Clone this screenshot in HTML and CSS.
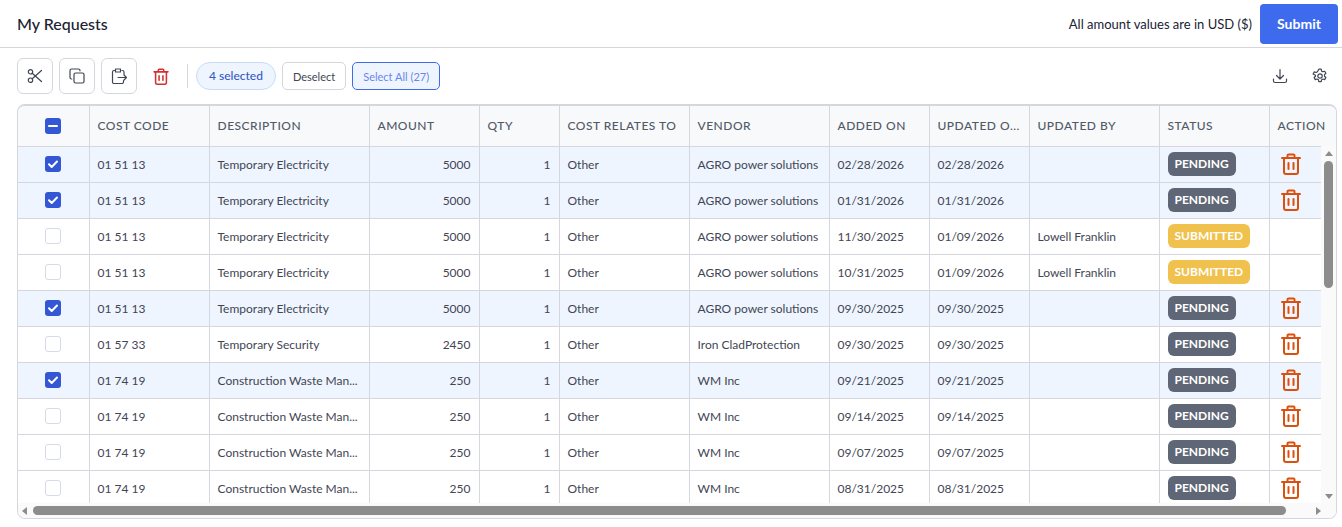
FILE: index.html
```html
<!DOCTYPE html>
<html>
<head>
    <title>My Requests</title>
    <link rel="stylesheet" href="styles.css">
</head>
<body>
    <svg class="defs" width="0" height="0">
        <symbol id="bin" viewBox="0 0 20 22">
            <path d="M1 5h18M6.500 5V2.500a1 1 0 0 1 1-1h5a1 1 0 0 1 1 1V5M3 5v14a2 2 0 0 0 2 2h10a2 2 0 0 0 2-2V5M7.500 10v6M12.500 10v6"/>
        </symbol>
    </svg>
    <header class="topbar">
        <h1>My Requests</h1>
        <div class="topbar-right">
            <span class="currency-note">All amount values are in USD ($)</span>
            <button class="submit">Submit</button>
        </div>
    </header>
    <div class="toolbar">
        <button class="tool">
            <svg viewBox="0 0 16 16" width="16" height="16"><circle cx="3.500" cy="3.800" r="2.200"/><circle cx="3.500" cy="12.200" r="2.200"/><path d="M5.200 5.200 14.500 13.500M5.200 10.800 14.500 2.500"/></svg>
        </button>
        <button class="tool">
            <svg viewBox="0 0 16 16" width="16" height="16"><rect x="5" y="5" width="10" height="10" rx="1.500"/><path d="M2.800 11H2.500A1.500 1.500 0 0 1 1 9.500v-7A1.500 1.500 0 0 1 2.500 1h7A1.500 1.500 0 0 1 11 2.500v.3"/></svg>
        </button>
        <button class="tool">
            <svg viewBox="0 0 16 16" width="16" height="16"><path d="M4.500 2.500H3A1.500 1.500 0 0 0 1.500 4v10A1.500 1.500 0 0 0 3 15.500h8a1.500 1.500 0 0 0 1.500-1.500v-1.500M11 2.500h.5A1.500 1.500 0 0 1 13 4v3M4.500 1h5v3h-5zM7 9.500h8.500M13 7l2.500 2.500L13 12"/></svg>
        </button>
        <button class="tool-plain">
            <svg class="bin-red" width="16" height="17"><use href="#bin"/></svg>
        </button>
        <span class="divider"></span>
        <span class="selected-pill">4 selected</span>
        <button class="deselect">Deselect</button>
        <button class="select-all">Select All (27)</button>
        <div class="toolbar-right">
            <svg viewBox="0 0 16 16" width="16" height="16"><path d="M8 1.500v9M4.500 7.500 8 11l3.500-3.500M1.500 11v2a1.500 1.500 0 0 0 1.500 1.500h10a1.500 1.500 0 0 0 1.500-1.500v-2"/></svg>
            <svg viewBox="0 0 16 16" width="16" height="16"><circle cx="8" cy="8" r="2.200"/><path d="M6.800 1.200h2.400l.4 1.900 1.300.7 1.800-.6 1.200 2.100-1.400 1.300v1.600l1.400 1.300-1.200 2.100-1.800-.6-1.300.7-.4 1.900H6.800l-.4-1.900-1.300-.7-1.800.6-1.200-2.100 1.400-1.300V7.300L1.100 6l1.200-2.100 1.800.6 1.300-.7z"/></svg>
        </div>
    </div>
    <div class="grid-wrap">
        <table class="grid">
            <colgroup>
                <col class="c-check"><col class="c-code"><col class="c-desc"><col class="c-amount"><col class="c-qty"><col class="c-rel"><col class="c-vendor"><col class="c-date"><col class="c-date"><col class="c-by"><col class="c-status"><col class="c-action">
            </colgroup>
            <thead>
                <tr>
                    <th class="check-cell"><span class="check mixed"><svg viewBox="0 0 16 16"><path d="M4 8h8"/></svg></span></th>
                    <th>COST CODE</th><th>DESCRIPTION</th><th>AMOUNT</th><th>QTY</th><th>COST RELATES TO</th><th>VENDOR</th><th>ADDED ON</th><th>UPDATED O...</th><th>UPDATED BY</th><th>STATUS</th><th>ACTION</th>
                </tr>
            </thead>
            <tbody>
                <tr class="picked">
                    <td class="check-cell"><span class="check on"><svg viewBox="0 0 16 16"><path d="m4 8.300 2.700 2.700L12 5.500"/></svg></span></td>
                    <td>01 51 13</td><td>Temporary Electricity</td><td class="num">5000</td><td class="num">1</td><td>Other</td><td>AGRO power solutions</td><td>02/28/2026</td><td>02/28/2026</td><td></td>
                    <td><span class="badge pending">PENDING</span></td><td><svg class="bin-orange" width="20" height="22"><use href="#bin"/></svg></td>
                </tr>
                <tr class="picked">
                    <td class="check-cell"><span class="check on"><svg viewBox="0 0 16 16"><path d="m4 8.300 2.700 2.700L12 5.500"/></svg></span></td>
                    <td>01 51 13</td><td>Temporary Electricity</td><td class="num">5000</td><td class="num">1</td><td>Other</td><td>AGRO power solutions</td><td>01/31/2026</td><td>01/31/2026</td><td></td>
                    <td><span class="badge pending">PENDING</span></td><td><svg class="bin-orange" width="20" height="22"><use href="#bin"/></svg></td>
                </tr>
                <tr>
                    <td class="check-cell"><span class="check"></span></td>
                    <td>01 51 13</td><td>Temporary Electricity</td><td class="num">5000</td><td class="num">1</td><td>Other</td><td>AGRO power solutions</td><td>11/30/2025</td><td>01/09/2026</td><td>Lowell Franklin</td>
                    <td><span class="badge submitted">SUBMITTED</span></td><td></td>
                </tr>
                <tr>
                    <td class="check-cell"><span class="check"></span></td>
                    <td>01 51 13</td><td>Temporary Electricity</td><td class="num">5000</td><td class="num">1</td><td>Other</td><td>AGRO power solutions</td><td>10/31/2025</td><td>01/09/2026</td><td>Lowell Franklin</td>
                    <td><span class="badge submitted">SUBMITTED</span></td><td></td>
                </tr>
                <tr class="picked">
                    <td class="check-cell"><span class="check on"><svg viewBox="0 0 16 16"><path d="m4 8.300 2.700 2.700L12 5.500"/></svg></span></td>
                    <td>01 51 13</td><td>Temporary Electricity</td><td class="num">5000</td><td class="num">1</td><td>Other</td><td>AGRO power solutions</td><td>09/30/2025</td><td>09/30/2025</td><td></td>
                    <td><span class="badge pending">PENDING</span></td><td><svg class="bin-orange" width="20" height="22"><use href="#bin"/></svg></td>
                </tr>
                <tr>
                    <td class="check-cell"><span class="check"></span></td>
                    <td>01 57 33</td><td>Temporary Security</td><td class="num">2450</td><td class="num">1</td><td>Other</td><td>Iron CladProtection</td><td>09/30/2025</td><td>09/30/2025</td><td></td>
                    <td><span class="badge pending">PENDING</span></td><td><svg class="bin-orange" width="20" height="22"><use href="#bin"/></svg></td>
                </tr>
                <tr class="picked">
                    <td class="check-cell"><span class="check on"><svg viewBox="0 0 16 16"><path d="m4 8.300 2.700 2.700L12 5.500"/></svg></span></td>
                    <td>01 74 19</td><td>Construction Waste Man...</td><td class="num">250</td><td class="num">1</td><td>Other</td><td>WM Inc</td><td>09/21/2025</td><td>09/21/2025</td><td></td>
                    <td><span class="badge pending">PENDING</span></td><td><svg class="bin-orange" width="20" height="22"><use href="#bin"/></svg></td>
                </tr>
                <tr>
                    <td class="check-cell"><span class="check"></span></td>
                    <td>01 74 19</td><td>Construction Waste Man...</td><td class="num">250</td><td class="num">1</td><td>Other</td><td>WM Inc</td><td>09/14/2025</td><td>09/14/2025</td><td></td>
                    <td><span class="badge pending">PENDING</span></td><td><svg class="bin-orange" width="20" height="22"><use href="#bin"/></svg></td>
                </tr>
                <tr>
                    <td class="check-cell"><span class="check"></span></td>
                    <td>01 74 19</td><td>Construction Waste Man...</td><td class="num">250</td><td class="num">1</td><td>Other</td><td>WM Inc</td><td>09/07/2025</td><td>09/07/2025</td><td></td>
                    <td><span class="badge pending">PENDING</span></td><td><svg class="bin-orange" width="20" height="22"><use href="#bin"/></svg></td>
                </tr>
                <tr>
                    <td class="check-cell"><span class="check"></span></td>
                    <td>01 74 19</td><td>Construction Waste Man...</td><td class="num">250</td><td class="num">1</td><td>Other</td><td>WM Inc</td><td>08/31/2025</td><td>08/31/2025</td><td></td>
                    <td><span class="badge pending">PENDING</span></td><td><svg class="bin-orange" width="20" height="22"><use href="#bin"/></svg></td>
                </tr>
            </tbody>
        </table>
        <div class="scroll-v">
            <span class="arrow-up"></span>
            <span class="thumb-v"></span>
            <span class="arrow-down"></span>
        </div>
        <div class="scroll-h">
            <span class="arrow-left"></span>
            <span class="thumb-h"></span>
            <span class="arrow-right"></span>
        </div>
    </div>
</body>
</html>
```

FILE: styles.css
```css
* {
    box-sizing: border-box;
}
html, body {
    height: 100%;
    overflow: hidden;
}
body {
    font-family: Lato, "Liberation Sans", sans-serif;
    margin: 0;
    background: #fff;
    color: #3f4654;
}
button {
    font-family: inherit;
    cursor: pointer;
}
.defs {
    position: absolute;
}
.topbar {
    height: 48px;
    display: flex;
    align-items: center;
    justify-content: space-between;
    padding: 0 4px 0 17px;
    border-bottom: 1px solid #d5d6de;
}
.topbar h1 {
    font-size: 16px;
    font-weight: 500;
    color: #1a2233;
    margin: 0;
}
.topbar-right {
    display: flex;
    align-items: center;
    gap: 8px;
}
.currency-note {
    font-size: 13px;
    color: #1a2233;
}
.submit {
    width: 78px;
    height: 40px;
    border: 0;
    border-radius: 4px;
    background: #3e6bed;
    color: #fff;
    font-size: 14px;
    font-weight: 700;
}
.toolbar {
    height: 56px;
    display: flex;
    align-items: center;
    padding: 0 14px 0 17px;
}
.toolbar svg, .tool-plain svg {
    fill: none;
    stroke: #3f4654;
    stroke-width: 1.200;
    stroke-linecap: round;
    stroke-linejoin: round;
}
.tool {
    width: 36px;
    height: 36px;
    margin-right: 6px;
    border: 1px solid #d5d6de;
    border-radius: 6px;
    background: #fff;
    display: flex;
    align-items: center;
    justify-content: center;
    padding: 0;
}
.tool-plain {
    width: 36px;
    height: 36px;
    border: 0;
    background: none;
    padding: 0;
    display: flex;
    align-items: center;
    justify-content: center;
}
.toolbar .bin-red {
    stroke: #d32f2f;
    stroke-width: 2;
}
.divider {
    width: 1px;
    height: 24px;
    margin: 0 8px 0 8px;
    background: #d5d6de;
}
.selected-pill {
    height: 28px;
    padding: 0 12px;
    margin-right: 6px;
    border: 1px solid #c6dcf8;
    border-radius: 14px;
    background: #eff5fe;
    color: #3559c7;
    font-size: 12px;
    font-weight: 500;
    line-height: 26px;
}
.deselect, .select-all {
    height: 28px;
    margin-right: 6px;
    border-radius: 5px;
    font-size: 11px;
    padding: 0 10px;
}
.deselect {
    border: 1px solid #d5d6de;
    background: #fff;
    color: #3f4654;
}
.select-all {
    border: 1px solid #3e6bed;
    background: #eff5fe;
    color: #6a86ee;
}
.toolbar-right {
    margin-left: auto;
    display: flex;
    align-items: center;
    gap: 24px;
}
.grid-wrap {
    position: relative;
    height: 415px;
    margin: 0 5px 0 17px;
    border: 1px solid #d5d6de;
    border-top-width: 2px;
    border-radius: 8px;
    overflow: hidden;
}
.grid {
    width: 1320px;
    table-layout: fixed;
    border-collapse: collapse;
    font-size: 12px;
}
.c-check { width: 71px; }
.c-code { width: 120px; }
.c-desc { width: 160px; }
.c-amount { width: 110px; }
.c-qty { width: 80px; }
.c-rel { width: 130px; }
.c-vendor { width: 140px; }
.c-date { width: 100px; }
.c-by { width: 130px; }
.c-status { width: 110px; }
.c-action { width: 69px; }
.grid th, .grid td {
    padding: 0 8px;
    border-right: 1px solid #d5d6de;
    border-bottom: 1px solid #d5d6de;
    white-space: nowrap;
    overflow: hidden;
}
.grid th:last-child, .grid td:last-child {
    border-right: 0;
}
.grid th {
    height: 40px;
    background: #f8f9fb;
    text-align: left;
    font-weight: 500;
    letter-spacing: 0.5px;
    color: #525967;
}
.grid td {
    height: 36px;
}
.grid td.num {
    text-align: right;
}
.grid .check-cell {
    text-align: center;
    padding: 0;
}
.picked td {
    background: #eff5fe;
}
.check {
    display: inline-block;
    width: 16px;
    height: 16px;
    vertical-align: middle;
    border: 1.500px solid #d5dbe8;
    border-radius: 3px;
    background: #fff;
}
.check.on, .check.mixed {
    border: 0;
    background: #3457d5;
}
.check svg {
    display: block;
    width: 16px;
    height: 16px;
    fill: none;
    stroke: #fff;
    stroke-width: 2;
    stroke-linecap: round;
    stroke-linejoin: round;
}
.badge {
    display: inline-block;
    height: 24px;
    line-height: 24px;
    padding: 0 7px;
    border-radius: 6px;
    color: #fff;
    font-weight: 700;
    font-size: 12px;
    vertical-align: middle;
}
.pending {
    background: #5f6675;
}
.submitted {
    background: #f1c14d;
}
.bin-orange {
    display: block;
    margin-left: 3px;
    fill: none;
    stroke: #d9500f;
    stroke-width: 2;
    stroke-linecap: round;
    stroke-linejoin: round;
}
.scroll-v {
    position: absolute;
    top: 40px;
    right: 0;
    bottom: 15px;
    width: 15px;
    background: #fafafa;
    display: flex;
    flex-direction: column;
    align-items: center;
}
.thumb-v {
    width: 9px;
    height: 127px;
    margin-top: 5px;
    border-radius: 5px;
    background: #8c8c8c;
}
.arrow-up {
    margin-top: 5px;
    border: 4.500px solid transparent;
    border-top: 0;
    border-bottom: 5px solid #8c8c8c;
}
.arrow-down {
    margin-top: auto;
    margin-bottom: 4px;
    border: 4.500px solid transparent;
    border-bottom: 0;
    border-top: 5px solid #8c8c8c;
}
.scroll-h {
    position: absolute;
    left: 0;
    right: 0;
    bottom: 0;
    height: 15px;
    background: #fafafa;
    display: flex;
    align-items: center;
    padding-right: 15px;
}
.thumb-h {
    width: 1253px;
    height: 9px;
    margin-left: 6px;
    border-radius: 5px;
    background: #8c8c8c;
}
.arrow-left {
    margin-left: 4px;
    border: 4.500px solid transparent;
    border-left: 0;
    border-right: 5px solid #8c8c8c;
}
.arrow-right {
    margin-left: auto;
    margin-right: 0;
    border: 4.500px solid transparent;
    border-right: 0;
    border-left: 5px solid #8c8c8c;
}
```
